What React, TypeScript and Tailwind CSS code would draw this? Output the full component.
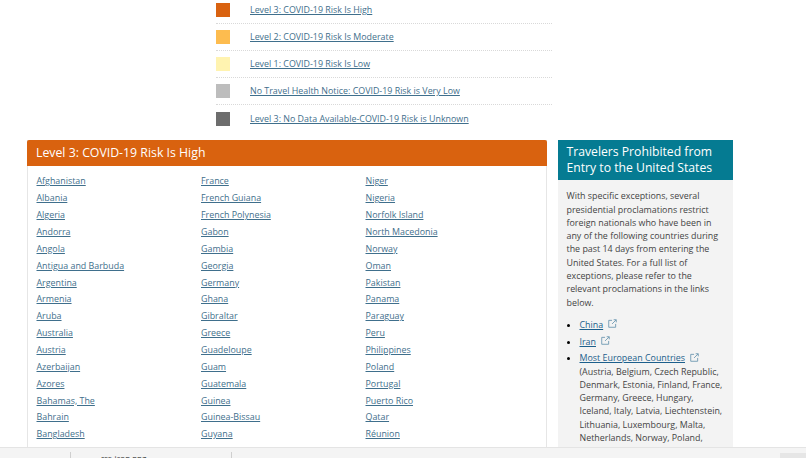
const font = "font-['Open_Sans','Noto_Sans',sans-serif]";

const levels = [
  { color: 'bg-[#d96210]', label: 'Level 3: COVID-19 Risk Is High' },
  { color: 'bg-[#fdbc4f]', label: 'Level 2: COVID-19 Risk Is Moderate' },
  { color: 'bg-[#fff3b0]', label: 'Level 1: COVID-19 Risk Is Low' },
  { color: 'bg-[#bdbdbd]', label: 'No Travel Health Notice: COVID-19 Risk is Very Low' },
  { color: 'bg-[#6d6d6d]', label: 'Level 3: No Data Available-COVID-19 Risk is Unknown' },
];

const columns = [
  ['Afghanistan', 'Albania', 'Algeria', 'Andorra', 'Angola', 'Antigua and Barbuda', 'Argentina', 'Armenia', 'Aruba', 'Australia', 'Austria', 'Azerbaijan', 'Azores', 'Bahamas, The', 'Bahrain', 'Bangladesh', 'Barbados'],
  ['France', 'French Guiana', 'French Polynesia', 'Gabon', 'Gambia', 'Georgia', 'Germany', 'Ghana', 'Gibraltar', 'Greece', 'Guadeloupe', 'Guam', 'Guatemala', 'Guinea', 'Guinea-Bissau', 'Guyana', 'Haiti'],
  ['Niger', 'Nigeria', 'Norfolk Island', 'North Macedonia', 'Norway', 'Oman', 'Pakistan', 'Panama', 'Paraguay', 'Peru', 'Philippines', 'Poland', 'Portugal', 'Puerto Rico', 'Qatar', 'Réunion', 'Romania'],
];

const ExternalIcon = () => (
  <svg viewBox="0 0 10 10" className="ml-[5px] inline-block h-[9px] w-[9px] align-[-0.5px] text-[#6f9ab2]" fill="none" stroke="currentColor" strokeWidth="1">
    <path d="M4.5 1.5H.8v7.7h7.7V5.5" />
    <path d="M4.5 5.5 9 1M6.3 .8h2.9v2.9" />
  </svg>
);

const App = () => {
  return (
    <div className={`relative h-[458px] w-[806px] overflow-hidden bg-white ${font}`}>
      <ul className="-mt-[3.5px] ml-[216px] w-[336px]">
        {levels.map((level, i) => (
          <li
            key={level.label}
            className={`flex h-[27.2px] items-center ${i < levels.length - 1 ? 'border-b border-dotted border-[#d9d9d9]' : ''}`}
          >
            <span className={`h-[14px] w-[14px] ${level.color}`} />
            <a href="#" className="ml-[20px] text-[8.9px] text-[#3f6f8c] underline">
              {level.label}
            </a>
          </li>
        ))}
      </ul>

      <div className="mt-[8px] ml-[27px] flex items-start gap-[11px]">
        <section className="h-[330px] w-[520px] border border-[#e6e6e6]">
          <h2 className="-m-px flex h-[26px] items-center rounded-t-[2px] bg-[#d9620f] pl-[9px] text-[12.3px] text-white">
            Level 3: COVID-19 Risk Is High
          </h2>
          <div className="flex pt-[8px] pl-[8.5px]">
            {columns.map((col) => (
              <ul key={col[0]} className="w-[164.5px]">
                {col.map((name) => (
                  <li key={name} className="h-[16.87px] text-[8.9px] leading-[16.87px]">
                    <a href="#" className="text-[#3f6f8c] underline">{name}</a>
                  </li>
                ))}
              </ul>
            ))}
          </div>
        </section>

        <aside className="h-[330px] w-[175px] bg-[#f3f3f3]">
          <h2 className="bg-[#057b92] px-[8.5px] pt-[4px] pb-[5px] text-[12.2px] leading-[15.4px] text-white">
            Travelers Prohibited from Entry to the United States
          </h2>
          <div className="px-[8.5px] pt-[9px] text-[8.9px] leading-[13.3px] text-[#444444]">
            <p>
              With specific exceptions, several presidential proclamations restrict foreign nationals who have been in any of the following countries during the past 14 days from entering the United States. For a full list of exceptions, please refer to the relevant proclamations in the links below.
            </p>
            <ul className="mt-[9px] list-disc pl-[13px] marker:text-black">
              <li className="mb-[3.4px]">
                <a href="#" className="font-medium text-[#1c5f8c] underline">China</a>
                <ExternalIcon />
              </li>
              <li className="mb-[3.4px]">
                <a href="#" className="font-medium text-[#1c5f8c] underline">Iran</a>
                <ExternalIcon />
              </li>
              <li>
                <a href="#" className="font-medium text-[#1c5f8c] underline">Most European Countries</a>
                <ExternalIcon />
                <br />
                (Austria, Belgium, Czech Republic, Denmark, Estonia, Finland, France, Germany, Greece, Hungary, Iceland, Italy, Latvia, Liechtenstein, Lithuania, Luxembourg, Malta, Netherlands, Norway, Poland, Portugal, Slovakia, Slovenia, Spain, Sweden)
              </li>
            </ul>
          </div>
        </aside>
      </div>

      {/* download bar over the bottom of the page */}
      <div className="absolute right-0 bottom-0 left-0 flex h-[11px] items-end justify-between border-t border-[#e4e4e4] bg-[#f4f4f4]">
        <div className="flex h-[6px]">
          <div className="w-[71px] border-r border-[#cfcfcf]" />
          <div className="w-[161px] overflow-hidden border-r border-[#cfcfcf] pl-[30px] text-[8px] leading-[11px] text-[#333333]">
            rss-icon.png
          </div>
        </div>
        <div className="h-[5px] w-[26px] bg-[#e6e6e6]" />
      </div>
    </div>
  );
};

export default App;
